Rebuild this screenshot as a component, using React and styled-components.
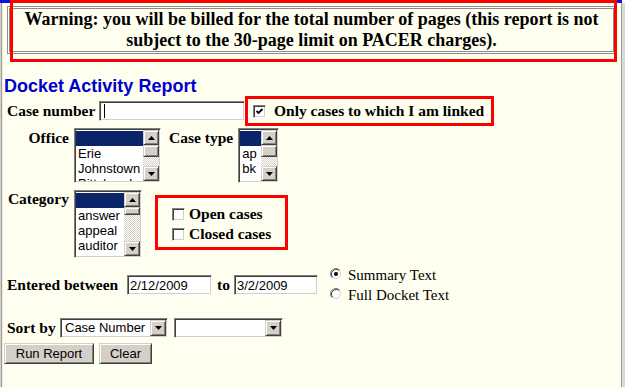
import React from "react";
import styled, { createGlobalStyle } from "styled-components";

const GlobalStyle = createGlobalStyle`
  html, body {
    margin: 0;
    padding: 0;
    background: #fffff0;
  }
  * {
    box-sizing: border-box;
  }
`;

const officeItems = ["", "Erie", "Johnstown", "Pittsburgh"];
const caseTypeItems = ["", "ap", "bk", "cv"];
const categoryItems = ["", "answer", "appeal", "auditor", "claims"];

const App = () => {
  return (
    <Page>
      <GlobalStyle />
      <TopBar />
      <Window>
        <WarningWrap>
          <WarningTable>
            <WarningCell>
              Warning: you will be billed for the total number of pages (this
              report is not
              <br />
              subject to the 30-page limit on PACER charges).
            </WarningCell>
          </WarningTable>
          <Callout />
        </WarningWrap>

        <Title>Docket Activity Report</Title>

        <Row $height={30}>
          <FieldLabel $width={92}>Case number</FieldLabel>
          <TextBox $width={146}>
            <Caret />
          </TextBox>
          <LinkedBox>
            <Checkbox checked />
            <CheckText $gap={8}>Only cases to which I am linked</CheckText>
          </LinkedBox>
        </Row>

        <Row $mt={2} $align="flex-start">
          <ColumnLabel $width={62}>Office</ColumnLabel>
          <ListBox items={officeItems} width={87} height={55} thumb={12} />
          <ColumnLabel $ml={8} $gapRight={5}>
            Case type
          </ColumnLabel>
          <ListBox items={caseTypeItems} width={41} height={55} thumb={12} />
        </Row>

        <Row $mt={7} $align="flex-start">
          <ColumnLabel $width={62} $top={0}>
            Category
          </ColumnLabel>
          <ListBox items={categoryItems} width={68} height={68} thumb={8} />
          <StatusBox>
            <CheckRow>
              <Checkbox />
              <CheckText $gap={4}>Open cases</CheckText>
            </CheckRow>
            <CheckRow>
              <Checkbox />
              <CheckText $gap={4}>Closed cases</CheckText>
            </CheckRow>
          </StatusBox>
        </Row>

        <Row $mt={7} $height={40}>
          <FieldLabel $width={120}>Entered between</FieldLabel>
          <TextBox $width={85}>2/12/2009</TextBox>
          <FieldLabel $ml={5} $width={17}>
            to
          </FieldLabel>
          <TextBox $width={84}>3/2/2009</TextBox>
          <RadioGroup>
            <RadioRow>
              <Radio checked />
              <RadioText>Summary Text</RadioText>
            </RadioRow>
            <RadioRow>
              <Radio />
              <RadioText>Full Docket Text</RadioText>
            </RadioRow>
          </RadioGroup>
        </Row>

        <Row $mt={13} $height={20}>
          <FieldLabel $width={53}>Sort by</FieldLabel>
          <Select $width={108}>
            <SelectText>Case Number</SelectText>
            <DropButton>
              <Arrow down />
            </DropButton>
          </Select>
          <Select $width={109} $ml={6}>
            <SelectText />
            <DropButton>
              <Arrow down />
            </DropButton>
          </Select>
        </Row>

        <ButtonRow>
          <Button $width={90}>Run Report</Button>
          <Button $width={53}>Clear</Button>
        </ButtonRow>
      </Window>
    </Page>
  );
};

const ListBox = ({ items, width, height, thumb }) => (
  <ListFrame $width={width} $height={height}>
    <ListItems>
      {items.map((item, index) => (
        <ListItem key={index} $selected={index === 0}>
          {item}
        </ListItem>
      ))}
    </ListItems>
    <ScrollBar>
      <ScrollButton>
        <Arrow />
      </ScrollButton>
      <Thumb $height={thumb} />
      <Track />
      <ScrollButton>
        <Arrow down />
      </ScrollButton>
    </ScrollBar>
  </ListFrame>
);

const Arrow = ({ down }) => (
  <svg width="7" height="4" viewBox="0 0 7 4">
    {down ? (
      <polygon points="0,0 7,0 3.5,4" fill="#000" />
    ) : (
      <polygon points="0,4 7,4 3.5,0" fill="#000" />
    )}
  </svg>
);

const Checkbox = ({ checked }) => (
  <CheckFrame>
    {checked && (
      <svg width="9" height="9" viewBox="0 0 9 9">
        <path
          d="M1.5 4 L3.5 6 L7.5 2"
          stroke="#000"
          strokeWidth="1.8"
          fill="none"
        />
      </svg>
    )}
  </CheckFrame>
);

const Radio = ({ checked }) => (
  <RadioIcon width="12" height="12" viewBox="0 0 12 12">
    <circle cx="6" cy="6" r="5" fill="#fff" />
    <path d="M2.11 9.89 A5.5 5.5 0 0 1 9.89 2.11" stroke="#808080" fill="none" />
    <path d="M9.89 2.11 A5.5 5.5 0 0 1 2.11 9.89" stroke="#fff" fill="none" />
    <path d="M2.82 9.18 A4.5 4.5 0 0 1 9.18 2.82" stroke="#404040" fill="none" />
    <path d="M9.18 2.82 A4.5 4.5 0 0 1 2.82 9.18" stroke="#d4d0c8" fill="none" />
    {checked && <circle cx="6" cy="6" r="2" fill="#000" />}
  </RadioIcon>
);

export default App;

const Page = styled.div`
  width: 625px;
  height: 387px;
  display: flex;
  flex-direction: column;
  background: #fffff0;
  overflow: hidden;
`;

const TopBar = styled.div`
  height: 3px;
  margin-right: 3px;
  background: #1010e0;
  flex-shrink: 0;
`;

const Window = styled.div`
  flex: 1;
  display: flex;
  flex-direction: column;
  padding-left: 4px;
  box-shadow: inset 1px 0 #d4d0c8, inset 2px 0 #9d9d9d, inset 3px 0 #ecebe4,
    inset -3px 0 #dcdad4, inset -4px 0 #9d9d9d;
`;

const WarningWrap = styled.div`
  position: relative;
  margin: 3px 0 0 3px;
  width: 609px;
`;

const WarningTable = styled.div`
  border: 1px solid #8c8c8c;
  padding: 1px;
`;

const WarningCell = styled.div`
  border: 1px solid #8c8c8c;
  height: 44px;
  text-align: center;
  font: bold 18px/21px "Liberation Serif", "Times New Roman", serif;
  color: #000;
  white-space: nowrap;
`;

const Callout = styled.div`
  position: absolute;
  top: -6px;
  left: 3px;
  right: -1px;
  bottom: -8px;
  border: 3px solid #f00;
  pointer-events: none;
`;

const Title = styled.h1`
  margin: 23px 0 0;
  font: bold 18px/19px "Liberation Sans", Arial, sans-serif;
  color: #0000cc;
`;

const Row = styled.div`
  display: flex;
  align-items: ${(p) => p.$align || "center"};
  margin-top: ${(p) => p.$mt || 0}px;
  height: ${(p) => (p.$height ? `${p.$height}px` : "auto")};
  padding-left: 3px;
`;

const FieldLabel = styled.span`
  flex-shrink: 0;
  width: ${(p) => (p.$width ? `${p.$width}px` : "auto")};
  margin-left: ${(p) => p.$ml || 0}px;
  font: bold 15.5px/18px "Liberation Serif", "Times New Roman", serif;
  color: #000;
  white-space: nowrap;
`;

const ColumnLabel = styled.span`
  flex-shrink: 0;
  width: ${(p) => (p.$width ? `${p.$width}px` : "auto")};
  margin-left: ${(p) => p.$ml || 0}px;
  margin-right: ${(p) => (p.$gapRight != null ? p.$gapRight : 5)}px;
  padding-top: ${(p) => (p.$top != null ? p.$top : 1)}px;
  text-align: right;
  font: bold 15.5px/18px "Liberation Serif", "Times New Roman", serif;
  color: #000;
  white-space: nowrap;
`;

const TextBox = styled.div`
  flex-shrink: 0;
  width: ${(p) => p.$width}px;
  height: 20px;
  display: flex;
  align-items: center;
  padding: 0 2px;
  background: #fff;
  border: 1px solid;
  border-color: #808080 #fff #fff #808080;
  box-shadow: inset 1px 1px #404040, inset -1px -1px #d4d0c8;
  font: 13px "Liberation Sans", Arial, sans-serif;
  color: #000;
`;

const Caret = styled.span`
  width: 1px;
  height: 14px;
  margin-left: 2px;
  background: #000;
`;

const LinkedBox = styled.label`
  flex-shrink: 0;
  width: 249px;
  height: 30px;
  display: flex;
  align-items: center;
  padding-left: 5px;
  border: 3px solid #f00;
`;

const CheckFrame = styled.span`
  flex-shrink: 0;
  width: 13px;
  height: 13px;
  display: flex;
  align-items: center;
  justify-content: center;
  background: #fff;
  border: 1px solid;
  border-color: #808080 #fff #fff #808080;
  box-shadow: inset 1px 1px #404040, inset -1px -1px #d4d0c8;
`;

const CheckText = styled.span`
  margin-left: ${(p) => p.$gap}px;
  font: bold 15.5px/18px "Liberation Serif", "Times New Roman", serif;
  color: #000;
  white-space: nowrap;
`;

const StatusBox = styled.div`
  flex-shrink: 0;
  width: 133px;
  height: 55px;
  margin: 5px 0 0 13px;
  padding: 6px 0 0 14px;
  border: 3px solid #f00;
  display: flex;
  flex-direction: column;
`;

const CheckRow = styled.label`
  height: 20px;
  display: flex;
  align-items: center;
`;

const ListFrame = styled.div`
  flex-shrink: 0;
  width: ${(p) => p.$width}px;
  height: ${(p) => p.$height}px;
  display: flex;
  padding: 1px;
  background: #fff;
  border: 1px solid;
  border-color: #808080 #fff #fff #808080;
  box-shadow: inset 1px 1px #404040, inset -1px -1px #d4d0c8;
`;

const ListItems = styled.div`
  flex: 1;
  min-width: 0;
  overflow: hidden;
  padding-top: 1px;
`;

const ListItem = styled.div`
  height: 15px;
  padding-left: 2px;
  font: 13px/15px "Liberation Sans", Arial, sans-serif;
  white-space: nowrap;
  color: ${(p) => (p.$selected ? "#fff" : "#000")};
  background: ${(p) => (p.$selected ? "#0a246a" : "transparent")};
`;

const ScrollBar = styled.div`
  width: 16px;
  display: flex;
  flex-direction: column;
`;

const raised = `
  background: #d4d0c8;
  border: 1px solid;
  border-color: #d4d0c8 #404040 #404040 #d4d0c8;
  box-shadow: inset 1px 1px #fff, inset -1px -1px #808080;
`;

const ScrollButton = styled.div`
  ${raised}
  height: 15px;
  flex-shrink: 0;
  display: flex;
  align-items: center;
  justify-content: center;
`;

const Thumb = styled.div`
  ${raised}
  height: ${(p) => p.$height}px;
  flex-shrink: 0;
`;

const Track = styled.div`
  flex: 1;
  background-color: #fff;
  background-image: repeating-conic-gradient(#d4d0c8 0 25%, #fff 0 50%);
  background-size: 2px 2px;
`;

const RadioGroup = styled.div`
  display: flex;
  flex-direction: column;
  margin-left: 12px;
`;

const RadioRow = styled.label`
  height: 20px;
  display: flex;
  align-items: center;
`;

const RadioIcon = styled.svg`
  flex-shrink: 0;
  margin-bottom: 3px;
`;

const RadioText = styled.span`
  margin-left: 6px;
  font: 15px/18px "Liberation Serif", "Times New Roman", serif;
  color: #000;
  white-space: nowrap;
`;

const Select = styled.div`
  flex-shrink: 0;
  width: ${(p) => p.$width}px;
  height: 20px;
  margin-left: ${(p) => p.$ml || 0}px;
  display: flex;
  padding: 1px;
  background: #fff;
  border: 1px solid;
  border-color: #808080 #fff #fff #808080;
  box-shadow: inset 1px 1px #404040, inset -1px -1px #d4d0c8;
`;

const SelectText = styled.span`
  flex: 1;
  padding-left: 3px;
  font: 13px/16px "Liberation Sans", Arial, sans-serif;
  color: #000;
  white-space: nowrap;
  overflow: hidden;
`;

const DropButton = styled.span`
  ${raised}
  width: 16px;
  flex-shrink: 0;
  display: flex;
  align-items: center;
  justify-content: center;
`;

const ButtonRow = styled.div`
  display: flex;
  gap: 5px;
  margin-top: 5px;
`;

const Button = styled.button`
  ${raised}
  width: ${(p) => p.$width}px;
  height: 21px;
  padding: 0;
  font: 13px "Liberation Sans", Arial, sans-serif;
  color: #000;
  cursor: pointer;
`;
